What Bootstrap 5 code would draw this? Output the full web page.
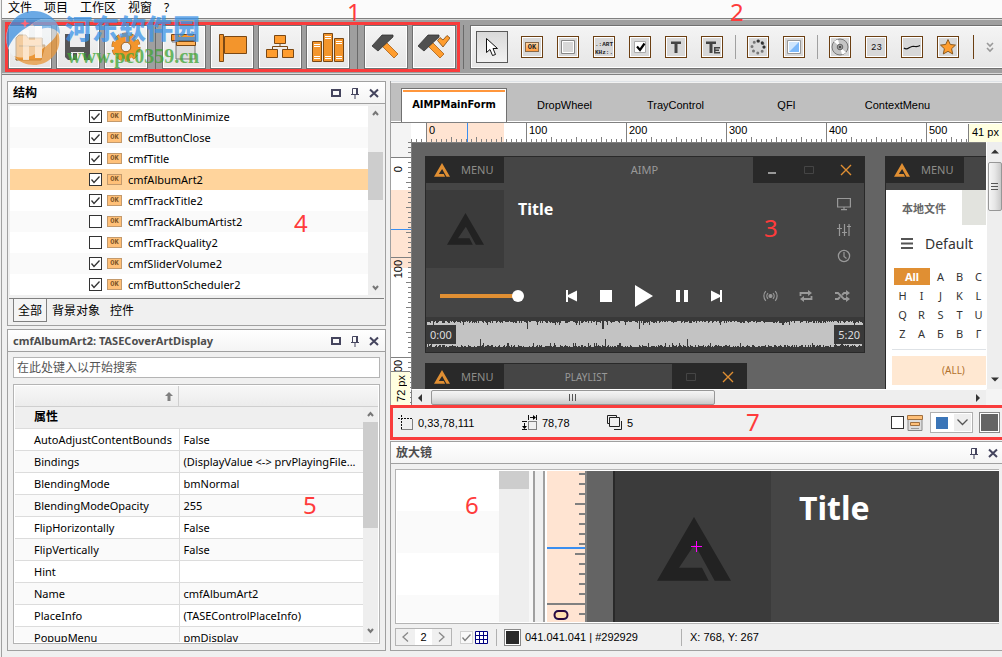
<!DOCTYPE html>
<html lang="zh-CN">
<head>
<meta charset="utf-8">
<meta name="viewport" content="width=device-width, initial-scale=1">
<title>AIMP Skin Editor</title>
<link href="https://cdn.jsdelivr.net/npm/bootstrap@5.3.0/dist/css/bootstrap.min.css" rel="stylesheet">
<script src="https://cdn.jsdelivr.net/npm/bootstrap@5.3.0/dist/js/bootstrap.bundle.min.js"></script>
<style>
:root{--ink:#000;--line:#a0a0a0;--face:#f0f0f0;--orange:#e08f33;--peach:#ffe4d2;--dark:#292929;--form:#454545}
body{font:12px/16px "Noto Sans","Noto Sans CJK SC",sans-serif;color:var(--ink);background:var(--face);height:100vh;min-height:620px;overflow:hidden}
button{font:inherit;color:inherit;background:none;border:0;padding:0}
svg{display:block;flex:none}
a{color:inherit;text-decoration:none}
.appframe{border-left:1px solid var(--line);margin-left:1px;height:100%}
.menubar{height:18px;flex:none;background:#fbfbfb;padding:0 6px;gap:12px;line-height:15px}
.toolbars{height:57px;flex:none;background:#9f9f9f;border-top:1px solid #808080;border-bottom:1px solid #808080;box-shadow:inset 0 1px #d8d8d8,inset 0 -1px #d8d8d8;padding:6px 0 0 6px;gap:4px}
.bigbtn{width:44px;height:44px;flex:none;border:1px solid #707070;background:linear-gradient(#f4f4f4,#e6e6e6);box-shadow:inset 0 0 0 1px #fff}
.tsep{width:6px;flex:none;height:44px;background:linear-gradient(#6a6a6a,#6a6a6a) center/1px 100% no-repeat}
.redbox{position:absolute;left:3px;top:22px;width:455px;height:50px;border:3px solid #f93c3c;pointer-events:none}
.palette{height:44px;border:1px solid #707070;border-right:0;background:linear-gradient(#f4f4f4,#e6e6e6);box-shadow:inset 1px 1px #fff,inset 0 -1px #fff;padding-left:5px;overflow:hidden}
.pick{width:32px;height:32px;border:1px solid #5a5a5a;background:linear-gradient(#d9d9d9,#f2f2f2);margin-right:6px;flex:none}
.tool{width:36px;height:32px;flex:none}
.tool span{width:22px;height:22px;border:1px solid #6b3f12;background:#d8d8d8;box-shadow:inset 0 0 0 1px #fff;overflow:hidden}
.psep{width:10px;height:24px;flex:none;background:linear-gradient(#a0a0a0,#a0a0a0) center/1px 100% no-repeat}
.psep.brown{width:14px;background-image:linear-gradient(#6b3f12,#6b3f12)}
.okchip{background:linear-gradient(#ffd9a8,#ff9a3c);border:1px solid #8a6a4a;font:bold 7px/8px "Liberation Mono",monospace;padding:0 2px;color:#222}
.workspace{display:grid;grid-template-columns:minmax(0,379fr) minmax(0,612fr);gap:4px;padding:6px 0 6px 5px}
.dock{border:1px solid var(--line);background:var(--face)}
.dockhead{height:22px;border-bottom:1px solid var(--line);background:linear-gradient(#fff,#f4f4f4);padding:0 5px;font-weight:700;color:#4d4d4d}
.dockhead h2{font-size:12px;line-height:20px;margin:0;font-weight:700;flex:1}
.dockhead h2.latin{font-size:11px}
.dockhead button{width:12px;height:12px;margin-left:7px}
.tree{background:#fff;margin:2px 2px 3px;font-size:11px}
.treerow{height:21px;padding-left:79px;gap:5px}
.treerow.even{background:#fafafa}
.treerow.picked{background:#ffd49c}
.treerow .okchip{width:15px;height:11px;line-height:9px;background:#ffc078;border-color:#c49a6c;color:#7a5226;margin-right:1px;text-align:center;padding:0}
.tick{appearance:none;width:13px;height:13px;border:1px solid #333;background:#fff;margin:0;flex:none}
.tick:checked{background:#fff url("data:image/svg+xml,%3Csvg xmlns='http://www.w3.org/2000/svg' viewBox='0 0 11 11'%3E%3Cpath d='M1.500 5.500L4 8.500L9.500 2.500' fill='none' stroke='%23333' stroke-width='1.300'/%3E%3C/svg%3E") center/11px no-repeat}
.tick:disabled{border-color:#bbb;opacity:.6}
.vbar{width:15px;flex:none;background:#eee;display:flex;flex-direction:column;align-items:center}
.vbar i{width:15px;background:#cdcdcd}
.pagetabs{border-top:1px solid #808080;height:27px;padding:0 4px;margin:0 1px}
.pagetabs button{padding:0 5px;height:23px;line-height:21px}
.pagetabs button.on{border:1px solid #808080;border-top:0;padding:0 4px;background:#f4f4f4}
.find{height:21px;border:1px solid #b4b4b4;margin:5px 5px 6px;padding:0 3px;font:inherit;background:#fff}
.find::placeholder{color:#555;opacity:1}
.propbox{border:1px solid #b4b4b4;background:#fff;margin:0 5px 6px;padding:1px;overflow:hidden;min-height:0}
.prophead{height:21px;flex:none;background:linear-gradient(#f7f7f7,#ececec);border-bottom:1px solid #cfcfcf}
.prophead div{width:164px;border-right:1px solid #cfcfcf;padding-right:5px}
.proptable{width:100%;table-layout:fixed;border-collapse:collapse;font-size:11px}
.proptable td,.proptable th{height:22px;padding:0 0 0 4px;border-bottom:1px solid #dcdcdc;white-space:nowrap;line-height:21px;font-weight:400}
.proptable tbody th{border-right:1px solid #dcdcdc;padding-left:19px}
.proptable tr:nth-child(odd) td,.proptable tr:nth-child(odd) th{background:#fafafa}
.proptable tbody .grouprow th{font-size:12px;font-weight:700;height:21px;line-height:20px;background:#efefef;border-right:0}
.formtabs{height:42px;flex:none;background:#bfbfbf;border-bottom:1px solid #808080;box-shadow:inset 0 1px #f2f2f2,inset 0 -1px #fff;padding-left:10px;overflow:hidden}
.formtabs,.hrule,.vrule,.statusrow,.lensfoot{font-family:"Liberation Sans","Noto Sans CJK SC",sans-serif;font-size:11px}
.formtabs button{width:111px;height:34px;flex:none}
.formtabs button.on{width:106px;margin-right:2px;height:35px;background:#fff;border:1px solid #707070;border-bottom:0;font:bold 11px/16px "DejaVu Sans Condensed","DejaVu Sans",sans-serif;margin-bottom:-1px}
.formtabs button.on span{border-top:2px solid #ff963c;width:102px;height:33px;line-height:26px;margin-top:1px}
.editor{display:grid;grid-template-columns:20px minmax(0,1fr) 16px;grid-template-rows:19px minmax(0,1fr) 16px;flex:1;min-height:0;background:#f4f4f4}
.hrule{grid-column:2/4;overflow:hidden;position:relative;padding-left:15px;
background:linear-gradient(#3a8ef0,#3a8ef0) 56px 0/1px 100% no-repeat,
repeating-linear-gradient(90deg,#808080 0 1px,transparent 1px 25px) 15px 100%/25px 5px repeat-x,
repeating-linear-gradient(90deg,#808080 0 1px,transparent 1px 5px) 15px 100%/5px 3px repeat-x,
linear-gradient(var(--peach),var(--peach)) 15px 0/78px 100% no-repeat,#fff}
.hrule b{width:100px;flex:none;font-weight:400;border-left:1px solid #808080;padding-left:2px;line-height:15px}
.pxtag{position:absolute;background:#ffffe1;border:0 solid #808080}
.hrule .pxtag{right:0;top:1px;bottom:0;width:34px;border-left-width:1px;line-height:17px;padding-left:3px;white-space:nowrap}
.vrule{overflow:hidden;position:relative;grid-row:2/4;padding-top:15px;
background:linear-gradient(#3a8ef0,#3a8ef0) 0 87px/100% 1px no-repeat,
repeating-linear-gradient(#808080 0 1px,transparent 1px 25px) 100% 15px/5px 25px repeat-y,
repeating-linear-gradient(#808080 0 1px,transparent 1px 5px) 100% 15px/3px 5px repeat-y,
linear-gradient(var(--peach),var(--peach)) 0 48px/100% 78px no-repeat,
linear-gradient(#f4f4f4,#f4f4f4) 0 0/100% 15px no-repeat,#fff}
.vrule b{height:100px;flex:none;border-top:1px solid #808080;font-weight:400;padding-top:2px}
.vrule span{writing-mode:vertical-rl;transform:rotate(180deg);line-height:14px}
.vrule .pxtag{left:0;bottom:0;width:19px;height:34px;border-top-width:1px}
.vrule .pxtag span{line-height:18px;white-space:nowrap}
.stage{background:#646464;border:1px solid #808080;border-width:1px 0 0 1px;position:relative;overflow:hidden;font-family:"Noto Sans","Noto Sans CJK SC",sans-serif;font-size:11px}
.skinwin{position:absolute;border:1px solid var(--dark);background:var(--form);color:#999;overflow:hidden}
.skinhead{height:26px}
.skinmenu{width:78px;background:var(--dark);padding-left:8px;gap:11px;flex:none;color:#8c8c88}
.skinmenu svg{fill:var(--orange)}
.winctl{background:var(--dark);flex:none}
.winctl button{flex:1}
.album{width:78px;height:78px;background:#3b3b3b;margin-top:7px}
.songtitle{font-size:16px;line-height:20px;font-weight:700;color:#fff;padding:16px 0 0 14px}
.sideicons{width:40px;gap:12px;padding-top:14px}
.deck{height:49px;padding:7px 0 0 14px}
.deck button{height:30px}
.vol{appearance:none;width:84px;height:12px;margin:0;background:linear-gradient(var(--orange),var(--orange)) 0 50%/78px 4px no-repeat}
.vol::-webkit-slider-thumb{appearance:none;width:12px;height:12px;border-radius:50%;background:#fff}
.wave{height:35px;background:#393939;position:relative}
.timetag{position:absolute;top:8px;height:19px;line-height:19px;background:#393939;color:#ddd;padding:0 4px}
.libbody{background:#fff;color:#333}
.letters{display:grid;grid-template-columns:repeat(5,19px);grid-auto-rows:19px;padding:10px 0 0 7px;text-align:center;font-size:11px;line-height:18px}
.letters .on{grid-column:span 2;background:var(--orange);color:#fff;font-weight:700;margin:0 1px;line-height:17px;height:17px}
.allrow{background:#ffe8d2;color:#b0702c;height:29px;line-height:29px;margin:6px 0 0 6px;padding-left:50px;font-size:10px}
.evbar{grid-column:3;grid-row:2;background:#eee;border-left:1px solid #fff;padding:7px 0}
.evbar .grip{width:14px;height:49px;margin-bottom:auto;border:1px solid #979797;border-radius:2px;background:linear-gradient(90deg,#f5f5f5,#e6e6e6 50%,#c9c9c9)}
.ehbar{grid-column:2;background:#eee;border-left:1px solid #808080;border-top:1px solid #fff;padding:0 5px}
.ehbar .grip{width:284px;height:15px;margin-left:8px;border:1px solid #979797;border-radius:2px;background:linear-gradient(#f5f5f5,#e6e6e6 50%,#c9c9c9)}
.statusrow{height:35px;flex:none;border:3px solid #f93c3c;border-right:0;background:var(--face);padding:0 2px 0 5px;line-height:20px}
.statusrow .cell{gap:5px}
.drop{width:43px;height:21px;border:1px solid #b0b0b0;background:#fff;position:relative}
.drop select{position:absolute;inset:0;opacity:0;width:100%}
.drop .arrow{width:17px;height:17px;background:#eee}
.swatch{border:1px solid #888;box-shadow:inset 0 0 0 1px #fff;flex:none}
.lens{height:155px;border:1px solid #b4b4b4;border-right:0;background:#fff;margin:5px 3px 0 4px;padding:1px 0 1px 1px;overflow:hidden}
.lens>div{flex:none}
.lenstree{width:102px;background:linear-gradient(#fff 0 40px,#fafafa 40px 82px,#fff 82px 124px,#fafafa 124px)}
.lensbar{width:30px;background:linear-gradient(#cdcdcd 0 18px,#eee 18px)}
.lensgap{width:18px;background:linear-gradient(90deg,#f7f7f7 0 4px,#a0a0a0 4px 6px,#f0f0f0 6px 14px,#a0a0a0 14px 16px,#fff 16px)}
.lensrule{width:40px;border-right:2px solid #808080;
background:linear-gradient(#3a8ef0,#3a8ef0) 0 76px/100% 2px no-repeat,linear-gradient(#808080,#808080) 0 132px/100% 2px no-repeat,
linear-gradient(#808080 0 2px,transparent 2px) 100% 32px/10px 50px repeat-y,
linear-gradient(#808080 0 2px,transparent 2px) 100% 2px/6px 10px repeat-y,var(--peach);padding:138px 0 0 6px}
.lensart{width:158px;background:#3b3b3b;border-left:2px solid var(--dark);padding:46px 0 0 42px;position:relative}
.lenstitle{background:#454545;padding:17px 0 0 28px;font:bold 32px/40px "Noto Sans",sans-serif;color:#fff}
.lensfoot{height:26px;padding:0 4px;line-height:18px}
.stepper{width:57px;height:18px;border:1px solid #b4b4b4}
.stepper button{width:19px}
.stepper input{width:17px;border:0;padding:0;text-align:center;background:#fff;font:inherit;height:16px}
.vline{width:1px;height:17px;background:#b0b0b0}
.callout{position:absolute;font:24px/24px "Noto Sans",sans-serif;color:#ff3b3b;pointer-events:none;z-index:5}
.brandmark{position:absolute;left:3px;top:10px;pointer-events:none;z-index:6}
.brandmark .cn{font:900 27px/32px "Noto Sans CJK SC",sans-serif;color:#3b93e8;opacity:.75}
.brandmark .url{font:bold 20px/20px "Liberation Serif",serif;color:#3fa535;opacity:.75}
</style>
</head>
<body>
<svg width="0" height="0" class="position-absolute">
<symbol id="delta" viewBox="0 0 222 192"><path d="M111 0L222 191H173L113 82L66 152H135L155 191H0Z"/></symbol>
<symbol id="restore" viewBox="0 0 12 12"><path d="M2 3h8v6H2z" fill="none" stroke="#45455e" stroke-width="2"/></symbol>
<symbol id="pin" viewBox="0 0 12 12"><path d="M3.500 7V1.500h4V7M2 7.500h8M6 8v4" fill="none" stroke="#45455e"/><path d="M7 1h2v6H7z" fill="#45455e"/></symbol>
<symbol id="cross" viewBox="0 0 12 12"><path d="M2 2.500l8 7.500M10 2.500L2 10" stroke="#45455e" stroke-width="2"/></symbol>
<symbol id="thinx" viewBox="0 0 12 12"><path d="M1 1l10 10M11 1L1 11" stroke="#e08f33" stroke-width="1.400"/></symbol>
<symbol id="hammer" viewBox="0 0 32 32"><path d="M12 15l4-4 12 12-4 4z" fill="#ff9d2e" stroke="#a86018" stroke-width=".8"/><path d="M2 15L12 4h11v2L8 20z" fill="#505050" stroke="#333" stroke-width=".8"/></symbol>
<symbol id="up" viewBox="0 0 15 15"><path d="M5 9l2.500-3L10 9" fill="none" stroke="#777" stroke-width="2"/></symbol>
<symbol id="down" viewBox="0 0 15 15"><path d="M5 6l2.500 3L10 6" fill="none" stroke="#777" stroke-width="2"/></symbol>
</svg>
<div class="appframe d-flex flex-column position-relative">
<nav class="menubar d-flex" aria-label="菜单"><a href="#">文件</a><a href="#">项目</a><a href="#">工作区</a><a href="#">视窗</a><a href="#">?</a></nav>

<div class="toolbars d-flex">
<button class="bigbtn d-flex align-items-center justify-content-center" aria-label="打开"><svg width="32" height="32"><path d="M2 29V7l3-3h7l2 3h14v7h3l-4 15z" fill="#f3952c" stroke="#8a5a20"/><path d="M5 15h26" stroke="#8a5a20"/></svg></button>
<button class="bigbtn d-flex align-items-center justify-content-center" aria-label="保存"><svg width="32" height="32"><path d="M3 3h25v26H6l-3-3z" fill="#555"/><path d="M8 3h15v13H8zM9 21h13v8H9z" fill="#eee"/><path d="M11 22h4v7h-4z" fill="#555"/></svg></button>
<button class="bigbtn d-flex align-items-center justify-content-center" aria-label="设置"><svg width="32" height="32"><circle cx="16" cy="16" r="12.500" fill="none" stroke="#9c601c" stroke-width="4" stroke-dasharray="5 2.854"/><circle cx="16" cy="16" r="12" fill="#f3952c"/><circle cx="16" cy="16" r="12.500" fill="none" stroke="#f3952c" stroke-width="3" stroke-dasharray="4.400 3.454" stroke-dashoffset="-.3"/><circle cx="16" cy="16" r="4.800" fill="#f0f0f0" stroke="#9c601c"/></svg></button>
<i class="tsep"></i>
<button class="bigbtn d-flex align-items-center justify-content-center" aria-label="窗体"><svg width="32" height="32"><path d="M4 5h23v23H8V11H4z" fill="#ddd" stroke="#777"/><path d="M3.500 3.500h24v6h-24z" fill="#f3952c" stroke="#7a4814"/><path d="M8.500 10.500h19v4h-19z" fill="#ffb259" stroke="#7a4814"/></svg></button>
<button class="bigbtn d-flex align-items-center justify-content-center" aria-label="标志"><svg width="32" height="32"><path d="M8.500 5.500h22v17h-22z" fill="#f3952c" stroke="#7a4814"/><path d="M3.500 3.500h4v27h-4z" fill="#f3952c" stroke="#7a4814"/></svg></button>
<button class="bigbtn d-flex align-items-center justify-content-center" aria-label="层次"><svg width="32" height="32"><path d="M16 13v3M8.500 18v-2.500h15V18" fill="none" stroke="#7a4814"/><path d="M10.500 4.500h11v8h-11zM2.500 18.500h11v8h-11zM18.500 18.500h11v8h-11z" fill="#ff9d2e" stroke="#7a4814"/></svg></button>
<button class="bigbtn d-flex align-items-center justify-content-center" aria-label="资源库"><svg width="32" height="32"><path d="M.5 10.500h9v20h-9zM11.500 2.500h9v28h-9zM22.500 7.500h9v23h-9z" fill="#f3952c" stroke="#7a4814"/><path d="M2 13.500h6M2 15.500h6M2 25.500h6M2 27.500h6M13 5.500h6M13 7.500h6M13 25.500h6M13 27.500h6M24 10.500h6M24 12.500h6M24 25.500h6M24 27.500h6" stroke="#fff"/></svg></button>
<i class="tsep"></i>
<button class="bigbtn d-flex align-items-center justify-content-center" aria-label="编译"><svg width="32" height="32"><use href="#hammer"/></svg></button>
<button class="bigbtn d-flex align-items-center justify-content-center" aria-label="编译并检查"><svg width="32" height="32"><use href="#hammer" x="-2"/><path d="M19.500 9.500l2.500-3 3 2.500 4-4.500 3 2.500-7 9z" fill="#ff9d2e" stroke="#7a4814" stroke-width=".8"/></svg></button>
<i class="tsep"></i>
<div class="palette d-flex align-items-center flex-grow-1">
<button class="pick d-flex align-items-center justify-content-center" aria-label="选择"><svg width="14" height="20"><path d="M1.500 1.500v14l3.500-3 2.500 6 3-1-2.500-6H12.500z" fill="#fff" stroke="#111"/></svg></button>
<button class="tool d-flex align-items-center justify-content-center" aria-label="按钮"><span class="d-flex align-items-center justify-content-center"><b class="okchip">OK</b></span></button>
<button class="tool d-flex align-items-center justify-content-center" aria-label="面板"><span><svg width="20" height="20"><path d="M3.500 3.500h13v13h-13z" fill="#d8d8d8" stroke="#888"/><path d="M4.500 4.500h11v11h-11z" fill="none" stroke="#fff"/></svg></span></button>
<button class="tool d-flex align-items-center justify-content-center" aria-label="文本信息"><span><svg width="20" height="20" font-family="Liberation Mono" font-weight="700" font-size="6" fill="#222"><text x="1" y="9">.:ART</text><text x="1" y="17">KHz:.</text></svg></span></button>
<button class="tool d-flex align-items-center justify-content-center" aria-label="复选框"><span><svg width="20" height="20"><path d="M4.500 4.500h11v11h-11z" fill="#fff" stroke="#aaa"/><path d="M7 9.500l3 3.500 4.500-6.500" fill="none" stroke="#000" stroke-width="2.200"/></svg></span></button>
<button class="tool d-flex align-items-center justify-content-center" aria-label="标签"><span><svg width="20" height="20"><path d="M5 4.500h10v2.500h-3.500V16h-3V7H5z" fill="#444"/></svg></span></button>
<button class="tool d-flex align-items-center justify-content-center" aria-label="编辑框"><span><svg width="20" height="20"><path d="M4 4.500h10v2.500h-3.500V16h-3V7H4zM12 10h6v1.500h-4.500v1H17V14h-3.500v1H18v1.500h-6z" fill="#444"/></svg></span></button>
<i class="psep"></i>
<button class="tool d-flex align-items-center justify-content-center" aria-label="加载"><span><svg width="20" height="20"><circle cx="10" cy="10" r="6" fill="none" stroke="#777" stroke-width="3" stroke-linecap="round" stroke-dasharray="0 4.712"/><path d="M10 4v.1M14.200 5.800v.1M16 10v.1" stroke="#333" stroke-width="3" stroke-linecap="round"/></svg></span></button>
<button class="tool d-flex align-items-center justify-content-center" aria-label="图像"><span><svg width="20" height="20"><path d="M3.500 3.500h13v13h-13z" fill="#7db9fa" stroke="#999"/><path d="M4 4h12L4 16z" fill="#cfe6fd"/><path d="M4.500 4.500h11v11h-11z" fill="none" stroke="#fff"/></svg></span></button>
<i class="psep"></i>
<button class="tool d-flex align-items-center justify-content-center" aria-label="封面"><span><svg width="20" height="20"><circle cx="10" cy="10" r="8" fill="#c4c4c4" stroke="#777"/><path d="M10 10L4 4.500A8 8 0 0 1 8 2.500zM10 10l6 5.500a8 8 0 0 1-4 2z" fill="#fff"/><circle cx="10" cy="10" r="2.800" fill="#999" stroke="#666"/><circle cx="10" cy="10" r="1" fill="#333"/></svg></span></button>
<button class="tool d-flex align-items-center justify-content-center" aria-label="计数"><span><svg width="20" height="20"><text x="5" y="13" font-family="Liberation Mono" font-size="9" fill="#111">23</text></svg></span></button>
<button class="tool d-flex align-items-center justify-content-center" aria-label="曲线"><span><svg width="20" height="20"><path d="M2 11c3 3 5-1 8-1.500s5 1 8-1" fill="none" stroke="#111" stroke-width="1.200"/></svg></span></button>
<button class="tool d-flex align-items-center justify-content-center" aria-label="评分"><span><svg width="20" height="20"><path d="M10 2.500l2.300 5 5.200.6-3.900 3.600 1.100 5.300-4.700-2.700L5.300 17l1.100-5.300L2.500 8.100l5.200-.6z" fill="#ff9d2e" stroke="#8a5a20" stroke-linejoin="round"/></svg></span></button>
<i class="psep brown"></i>
<button class="ms-1" aria-label="更多"><svg width="12" height="12"><path d="M3 2l3 3 3-3M3 7l3 3 3-3" fill="none" stroke="#999" stroke-width="1.600"/></svg></button>
</div>
</div>
<div class="redbox"></div>

<main class="workspace flex-grow-1" style="min-height:0">
<div class="d-flex flex-column" style="min-height:0;gap:3px">
<section class="dock position-relative flex-shrink-0">
<header class="dockhead d-flex align-items-center"><h2 class="text-black">结构</h2><button aria-label="还原"><svg width="12" height="12"><use href="#restore"/></svg></button><button aria-label="固定"><svg width="12" height="12"><use href="#pin"/></svg></button><button aria-label="关闭"><svg width="12" height="12"><use href="#cross"/></svg></button></header>
<div class="tree d-flex">
<ul class="list-unstyled m-0 flex-grow-1">
<li><label class="treerow d-flex align-items-center"><input class="tick" type="checkbox" checked><b class="okchip">OK</b>cmfButtonMinimize</label></li>
<li><label class="treerow even d-flex align-items-center"><input class="tick" type="checkbox" checked><b class="okchip">OK</b>cmfButtonClose</label></li>
<li><label class="treerow d-flex align-items-center"><input class="tick" type="checkbox" checked><b class="okchip">OK</b>cmfTitle</label></li>
<li><label class="treerow picked d-flex align-items-center"><input class="tick" type="checkbox" checked><b class="okchip">OK</b>cmfAlbumArt2</label></li>
<li><label class="treerow d-flex align-items-center"><input class="tick" type="checkbox" checked><b class="okchip">OK</b>cmfTrackTitle2</label></li>
<li><label class="treerow even d-flex align-items-center"><input class="tick" type="checkbox"><b class="okchip">OK</b>cmfTrackAlbumArtist2</label></li>
<li><label class="treerow d-flex align-items-center"><input class="tick" type="checkbox"><b class="okchip">OK</b>cmfTrackQuality2</label></li>
<li><label class="treerow even d-flex align-items-center"><input class="tick" type="checkbox" checked><b class="okchip">OK</b>cmfSliderVolume2</label></li>
<li><label class="treerow d-flex align-items-center"><input class="tick" type="checkbox" checked><b class="okchip">OK</b>cmfButtonScheduler2</label></li>
</ul>
<div class="vbar"><svg width="15" height="46"><use href="#up" width="15" height="15"/></svg><i style="height:48px"></i><svg class="mt-auto" width="15" height="15"><use href="#down"/></svg></div>
</div>
<div class="pagetabs d-flex"><button class="on">全部</button><button>背景对象</button><button>控件</button></div>
<span class="callout" style="left:286px;top:129px">4</span>
</section>
<section class="dock d-flex flex-column flex-grow-1 position-relative" style="min-height:0">
<header class="dockhead d-flex align-items-center flex-shrink-0"><h2 class="latin">cmfAlbumArt2: TASECoverArtDisplay</h2><button aria-label="还原"><svg width="12" height="12"><use href="#restore"/></svg></button><button aria-label="固定"><svg width="12" height="12"><use href="#pin"/></svg></button><button aria-label="关闭"><svg width="12" height="12"><use href="#cross"/></svg></button></header>
<input class="find flex-shrink-0" type="text" placeholder="在此处键入以开始搜索" aria-label="搜索">
<div class="propbox d-flex flex-column flex-grow-1">
<div class="prophead d-flex"><div class="d-flex align-items-center justify-content-end"><svg width="8" height="9"><path d="M4 0l4 4H5.500v5h-3V4H0z" fill="#808080"/></svg></div></div>
<div class="d-flex flex-grow-1" style="min-height:0">
<div class="flex-grow-1 overflow-hidden">
<table class="proptable"><colgroup><col style="width:164px"><col></colgroup>
<tbody>
<tr class="grouprow"><th colspan="2">属性</th></tr>
<tr><th>AutoAdjustContentBounds</th><td>False</td></tr>
<tr><th>Bindings</th><td>(DisplayValue &lt;-&gt; prvPlayingFile...</td></tr>
<tr><th>BlendingMode</th><td>bmNormal</td></tr>
<tr><th>BlendingModeOpacity</th><td>255</td></tr>
<tr><th>FlipHorizontally</th><td>False</td></tr>
<tr><th>FlipVertically</th><td>False</td></tr>
<tr><th>Hint</th><td></td></tr>
<tr><th>Name</th><td>cmfAlbumArt2</td></tr>
<tr><th>PlaceInfo</th><td>(TASEControlPlaceInfo)</td></tr>
<tr><th>PopupMenu</th><td>pmDisplay</td></tr>
</tbody></table>
</div>
<div class="vbar"><svg width="15" height="15"><use href="#up"/></svg><i style="height:106px"></i><svg class="mt-auto mb-1" width="15" height="15"><use href="#down"/></svg></div>
</div>
</div>
<span class="callout" style="left:295px;top:163px">5</span>
</section>
</div>

<div class="d-flex flex-column" style="min-height:0">
<section class="d-flex flex-column flex-grow-1 border-start position-relative" style="min-height:0;border-color:#a0a0a0!important">
<div class="formtabs d-flex align-items-end border-top"><button class="on d-flex justify-content-center"><span>AIMPMainForm</span></button><button>DropWheel</button><button>TrayControl</button><button>QFI</button><button>ContextMenu</button></div>
<div class="editor">
<div></div>
<div class="hrule d-flex"><b>0</b><b>100</b><b>200</b><b>300</b><b>400</b><b>500</b><span class="pxtag">41 px</span></div>
<div class="vrule d-flex flex-column"><b><span>0</span></b><b><span>100</span></b><b><span>200</span></b><div class="pxtag d-flex align-items-center justify-content-center"><span>72 px</span></div></div>
<div class="stage">
<div class="skinwin" style="left:13px;top:13px;width:440px;height:197px">
<div class="skinhead d-flex"><div class="skinmenu d-flex align-items-center"><svg width="16" height="14"><use href="#delta"/></svg>MENU</div><div class="flex-grow-1 d-flex align-items-center justify-content-center" style="padding-left:32px">AIMP</div>
<div class="winctl d-flex" style="width:111px"><button aria-label="最小化"><svg class="mx-auto" width="10" height="10"><path d="M1 7h8v2H1z" fill="#999"/></svg></button><button aria-label="最大化"><svg class="mx-auto" width="10" height="8"><path d="M.5.5h9v7h-9z" fill="none" stroke="#454545"/></svg></button><button aria-label="关闭窗口"><svg class="mx-auto" width="12" height="12"><use href="#thinx"/></svg></button></div></div>
<div class="d-flex" style="height:85px"><div class="album d-flex justify-content-center align-items-center"><svg width="37" height="32" fill="#222"><use href="#delta"/></svg></div><div class="songtitle flex-grow-1">Title</div>
<div class="sideicons d-flex flex-column align-items-center">
<svg width="14" height="14"><path d="M.6 1.500h12.800v8.500H.6zM7 10v2.500M4 12.700h6" fill="none" stroke="#999" stroke-width="1.200"/></svg>
<svg width="14" height="14"><path d="M2.500 1v12M7.500 1v12M12 1v12M0 5.500h5M5 9.500h5M10 3.500h4" stroke="#999" stroke-width="1.200"/></svg>
<svg width="14" height="14"><circle cx="7" cy="7" r="5.600" fill="none" stroke="#999" stroke-width="1.300"/><path d="M7 3v4.500l2.500 2" fill="none" stroke="#999" stroke-width="1.200"/></svg></div></div>
<div class="deck d-flex align-items-center">
<input class="vol" type="range" min="0" max="100" value="100" aria-label="音量"><span style="width:30px"></span>
<button style="width:34px" aria-label="上一首"><svg class="mx-auto" width="12" height="12" fill="#fff"><path d="M1 0h2v5L12 .5v11L3 7v5H1z"/></svg></button>
<button style="width:36px" aria-label="停止"><svg class="mx-auto" width="12" height="12"><path d="M0 0h12v12H0z" fill="#fff"/></svg></button>
<button style="width:40px" aria-label="播放"><svg class="mx-auto" width="18" height="24"><path d="M0 1v22l18-11z" fill="#fff"/></svg></button>
<button style="width:36px" aria-label="暂停"><svg class="mx-auto" width="12" height="12"><path d="M0 0h4v12H0zM8 0h4v12H8z" fill="#fff"/></svg></button>
<button style="width:34px" aria-label="下一首"><svg class="mx-auto" width="12" height="12" fill="#fff"><path d="M11 0H9v5L0 .5v11L9 7v5h2z"/></svg></button>
<span style="width:18px"></span>
<button style="width:36px" aria-label="电台"><svg class="mx-auto" width="15" height="12" fill="none" stroke="#999" stroke-width="1.200"><circle cx="7.500" cy="6" r="1.500" fill="#999"/><path d="M5 3.200a4 4 0 0 0 0 5.600M10 3.200a4 4 0 0 1 0 5.600M2.800 1.200a7 7 0 0 0 0 9.600M12.200 1.200a7 7 0 0 1 0 9.600"/></svg></button>
<button style="width:36px" aria-label="循环"><svg class="mx-auto" width="14" height="12"><path d="M1.500 6V3H10M12.500 6v3H4" fill="none" stroke="#999" stroke-width="1.800"/><path d="M9 0l4 3-4 3zM5 6L1 9l4 3z" fill="#999"/></svg></button>
<button style="width:36px" aria-label="随机"><svg class="mx-auto" width="15" height="12"><path d="M0 3h3l6 6h2.500M0 9h3l2-2M7 5l2-2h2.500" fill="none" stroke="#999" stroke-width="1.800"/><path d="M11 0l4 3-4 3zM11 6l4 3-4 3z" fill="#999"/></svg></button>
</div>
<div class="wave"><svg width="438" height="35"><path id="wavepath" fill="#c3c3c3" shape-rendering="crispEdges"/></svg><span class="timetag start-0">0:00</span><span class="timetag end-0">5:20</span></div>
</div>
<div class="skinwin" style="left:13px;top:220px;width:322px;height:200px">
<div class="skinhead d-flex"><div class="skinmenu d-flex align-items-center"><svg width="16" height="14"><use href="#delta"/></svg>MENU</div><div class="flex-grow-1 text-center pe-1" style="line-height:27px;font-size:10px">PLAYLIST</div>
<div class="winctl d-flex" style="width:74px"><button aria-label="最大化列表"><svg class="mx-auto" width="10" height="8"><path d="M.5.5h9v7h-9z" fill="none" stroke="#454545"/></svg></button><button aria-label="关闭列表"><svg class="mx-auto" width="12" height="12"><use href="#thinx"/></svg></button></div></div>
</div>
<div class="skinwin" style="left:473px;top:13px;width:260px;height:300px">
<div class="skinhead d-flex"><div class="skinmenu d-flex align-items-center"><svg width="16" height="14"><use href="#delta"/></svg>MENU</div></div>
<div class="libbody h-100" style="margin-top:7px">
<div class="d-flex" style="height:35px"><b class="text-center" style="width:76px;line-height:37px;color:#666">本地文件</b><div class="flex-grow-1" style="background:#e2e3de"></div></div>
<div class="d-flex align-items-center" style="height:33px;padding:4px 0 0 15px;gap:12px;font-size:14px"><svg width="12" height="11"><path d="M0 1h12M0 5.500h12M0 10h12" stroke="#555" stroke-width="2"/></svg>Default</div>
<div class="letters"><span class="on">All</span><span>A</span><span>B</span><span>C</span><span>H</span><span>I</span><span>J</span><span>K</span><span>L</span><span>Q</span><span>R</span><span>S</span><span>T</span><span>U</span><span>Z</span><span>А</span><span>Б</span><span>В</span><span>Г</span></div>
<div class="border-top" style="margin:5px 0 0 6px"></div>
<div class="allrow">(ALL)</div>
</div>
</div>
</div>
<div class="evbar d-flex flex-column align-items-center"><svg width="8" height="5"><path d="M0 4.500L4 .5l4 4z" fill="#333"/></svg><div class="grip d-flex align-items-center justify-content-center mt-2"><svg width="7" height="8"><path d="M0 .5h7M0 3.500h7M0 6.500h7" stroke="#555"/></svg></div><svg width="8" height="5"><path d="M0 .5l4 4 4-4z" fill="#333"/></svg></div>
<div class="ehbar d-flex align-items-center"><svg width="6" height="8"><path d="M5 0L1 4l4 4z" fill="#333"/></svg><div class="grip d-flex align-items-center justify-content-center"><svg width="8" height="7"><path d="M.5 0v7M3.500 0v7M6.500 0v7" stroke="#555"/></svg></div><svg class="ms-auto" width="6" height="8"><path d="M1 0l4 4-4 4z" fill="#333"/></svg></div>
</div>
<span class="callout" style="left:373px;top:135px">3</span>
</section>
<div class="statusrow d-flex align-items-center position-relative">
<div class="cell d-flex align-items-center" style="width:124px"><svg width="15" height="15"><path d="M3.500 0v14M0 3.500h14" stroke="#111" stroke-dasharray="2 1"/><path d="M3.500 14.500h11V3.500" fill="none" stroke="#111" stroke-dasharray="1 1"/></svg>0,33,78,111</div>
<div class="cell d-flex align-items-center" style="width:85px"><svg width="15" height="15"><path d="M6.500 0v5M14.500 0v5M8 2.500h5M0 6.500h5M0 14.500h5M2.500 8v5" stroke="#111"/><path d="M11 0l3 2.500L11 5zM0 11l2.500 3L5 11z"/><path d="M6.500 14.500V6.500h8v8z" fill="none" stroke="#111" stroke-dasharray="1 1"/></svg>78,78</div>
<div class="cell d-flex align-items-center"><svg width="15" height="15"><path d="M3 8.500H.5v-8h9V3M2.500 2.500h10v9h-10zM14.500 6v8.500H7" fill="none" stroke="#222"/></svg>5</div>
<span class="callout" style="left:353px;top:2px">7</span>
<input class="tick ms-auto" type="checkbox" aria-label="显示窗体" style="margin-right:3px">
<svg width="16" height="16"><path d="M1 4h14v11.500H1z" fill="#ddd" stroke="#888"/><path d="M.5.500h15v4H.5zM3.500 7.500h9v3h-9z" fill="#ffc078" stroke="#a07040"/><path d="M4 13.500h8" stroke="#999"/></svg>
<label class="drop d-flex align-items-center justify-content-between" style="margin:0 6px 0 7px;padding:0 1px 0 5px"><svg width="12" height="12"><path d="M0 0h12v12H0z" fill="#3a75b8"/></svg><span class="arrow d-flex align-items-center justify-content-center"><svg width="11" height="7"><path d="M.5.500l5 5 5-5" fill="none" stroke="#555" stroke-width="1.300"/></svg></span><select aria-label="颜色"><option></option></select></label>
<button class="swatch" style="width:21px;height:21px;background:#646464" aria-label="背景色"></button>
</div>
<section class="dock border-end-0 position-relative flex-shrink-0" style="margin-top:1px">
<header class="dockhead d-flex align-items-center" style="padding-right:3px"><h2>放大镜</h2><button aria-label="固定"><svg width="12" height="12"><use href="#pin"/></svg></button><button aria-label="关闭"><svg width="12" height="12"><use href="#cross"/></svg></button></header>
<div class="lens d-flex">
<div class="lenstree"></div><div class="lensbar"></div><div class="lensgap"></div>
<div class="lensrule"><svg width="16" height="12"><rect x="1" y="1" width="14" height="10" rx="4" fill="#7ab8d8"/><rect x="1.500" y="2" width="13" height="8" rx="4" fill="#ffe0b0" stroke="#2a0840" stroke-width="2"/></svg></div>
<div style="width:26px;background:#646464"></div>
<div class="lensart"><svg width="74" height="64" fill="#222"><use href="#delta"/></svg><svg class="position-absolute" style="left:76px;top:70px" width="11" height="11"><path d="M5.500 0v11M0 5.500h11" stroke="#f0f"/></svg></div>
<div class="lenstitle flex-grow-1">Title</div>
</div>
<div class="lensfoot d-flex align-items-center">
<div class="stepper d-flex"><button aria-label="缩小"><svg class="mx-auto" width="7" height="10"><path d="M6 .5L1 5l5 4.500" fill="none" stroke="#888" stroke-width="1.300"/></svg></button><input type="text" value="2" aria-label="倍数"><button aria-label="放大"><svg class="mx-auto" width="7" height="10"><path d="M1 .5L6 5 1 9.500" fill="none" stroke="#888" stroke-width="1.300"/></svg></button></div>
<input class="tick" type="checkbox" checked disabled aria-label="网格" style="margin:0 2px 0 8px">
<svg width="13" height="13"><path d="M.5.500h12v12H.5z" fill="#fff" stroke="#000080"/><path d="M4.500 0v13M8.500 0v13M0 4.500h13M0 8.500h13" stroke="#000080"/></svg>
<i class="vline" style="margin:0 7px 0 8px"></i>
<button class="swatch" style="width:17px;height:17px;background:#292929;margin-right:4px" aria-label="取色"></button>
<span style="width:156px">041.041.041 | #292929</span><i class="vline me-2"></i><span>X: 768, Y: 267</span>
</div>
<span class="callout" style="left:74px;top:51px">6</span>
</section>
</div>
</main>

<span class="callout" style="left:345px;top:0">1</span>
<span class="callout" style="left:728px;top:0">2</span>
<div class="brandmark d-flex">
<svg width="58" height="58" opacity=".75"><circle cx="28" cy="28" r="27" fill="#f2f5f8" fill-opacity=".75"/><path d="M3 38C-3 16 12 1 29 1c9 0 17 4 22 11-9-5-17-3-24 2-9 6-17 9-24 24z" fill="#3b8ede"/><path d="M27 14c8-6 17-7 24-2 3 4 4 8 4 12-6-7-13-8-21-4z" fill="#6caeea"/><path d="M53 22c6 18-8 33-24 33-8 0-15-3-20-9 10 4 20 0 27-6 8-6 14-11 17-18z" fill="#e9973a"/><path d="M18 20h6v10h6V16h7v32h-7V36h-6v14h-6z" fill="#fff"/><path d="M20 9l1.500 3.500L25 13l-3.500 1.500L20 18l-1.500-3.500L15 13l3.500-.5z" fill="#ff7088"/></svg>
<div style="padding:2px 0 0 2px"><div class="cn">河东软件园</div><div class="url" style="margin:2px 0 0 2px">www.pc0359.cn</div></div>
</div>
</div>
<script>
// Volume envelope of the track: a flat body with short notches along both edges.
(function(){
  var seed=7,d="";
  function rnd(){seed=(seed*1103515245+12345)%2147483648;return seed/2147483648}
  function notch(){var r=rnd();return r>.99?8:r>.93?4:r>.7?2:r>.35?1:0}
  for(var x=1;x<437;x++){var t=4+notch(),b=30-notch();d+="M"+x+" "+t+"h1V"+b+"h-1z"}
  document.getElementById("wavepath").setAttribute("d",d);
})();
</script>
</body>
</html>
